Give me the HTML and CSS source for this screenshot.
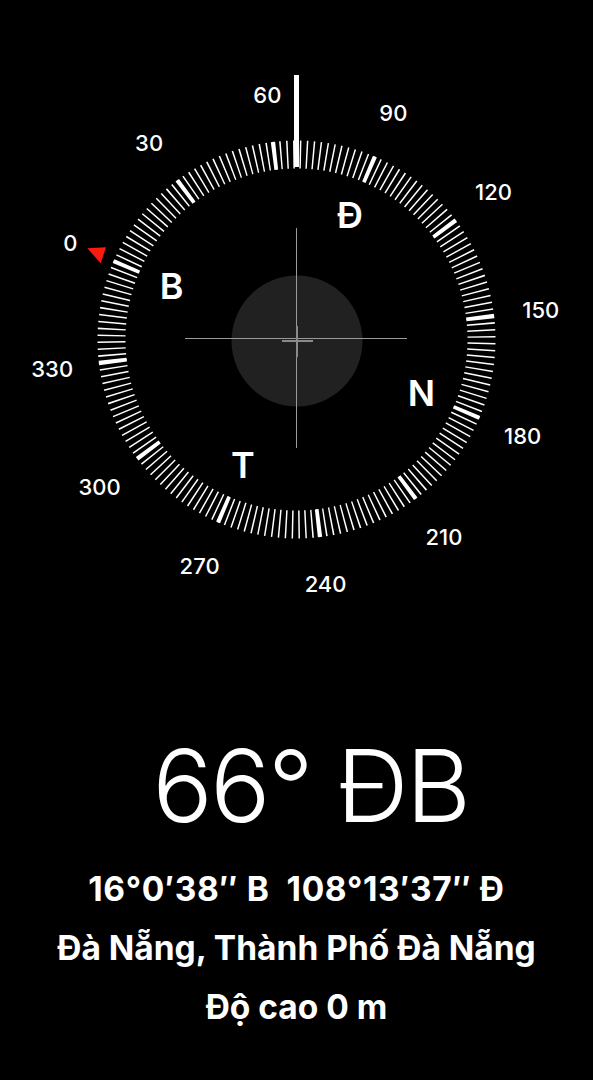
FILE: index.html
```html
<!DOCTYPE html>
<html lang="vi">
<head>
    <meta charset="UTF-8">
    <meta name="viewport" content="width=device-width, initial-scale=1.0">
    <title>La bàn</title>
    <link rel="stylesheet" href="styles.css">
</head>
<body>
    <main class="compass-screen">
        <svg class="dial" width="593" height="640" viewBox="0 0 593 640">
            <!-- vạch chia, xoay theo hướng 66.8 -->
            <g transform="rotate(-66.8 296.5 339.5)">
                <circle class="ticks-minor" cx="296.5" cy="339.5" r="185" pathLength="360"/>
                <circle class="ticks-major" cx="296.5" cy="339.5" r="185" pathLength="360"/>
            </g>

            <rect class="pointer" x="294" y="75" width="5" height="92"/>

            <polygon class="north-mark" points="87.3,248.3 106,247.3 100.7,263.3"/>

            <g class="deg-labels">
                <text x="70.4" y="250.6">0</text>
                <text x="149.1" y="150.5">30</text>
                <text x="267.4" y="103.2">60</text>
                <text x="393.4" y="121.4">90</text>
                <text x="493.5" y="200.2">120</text>
                <text x="540.8" y="318.4">150</text>
                <text x="522.6" y="444.4">180</text>
                <text x="443.9" y="544.5">210</text>
                <text x="325.6" y="591.8">240</text>
                <text x="199.6" y="573.6">270</text>
                <text x="99.5" y="494.9">300</text>
                <text x="52.2" y="376.6">330</text>
            </g>

            <g class="cardinals">
                <text x="171.5" y="298.9">B</text>
                <text x="350.1" y="227.5">Đ</text>
                <text x="421.5" y="406.1">N</text>
                <text x="242.9" y="477.5">T</text>
            </g>

            <circle class="level" cx="297" cy="341" r="65.5"/>
            <line class="cross" x1="185" y1="338.5" x2="407" y2="338.5"/>
            <line class="cross" x1="296.5" y1="228" x2="296.5" y2="448"/>
            <line class="bubble" x1="282" y1="341" x2="313" y2="341"/>
            <line class="bubble" x1="297" y1="326" x2="297" y2="357"/>
        </svg>

        <div class="heading">66° ĐB</div>

        <div class="details">
            <div class="coords">16°0′38″ B&nbsp; 108°13′37″ Đ</div>
            <div>Đà Nẵng, Thành Phố Đà Nẵng</div>
            <div>Độ cao 0 m</div>
        </div>
    </main>
</body>
</html>
```

FILE: styles.css
```css
body {
    margin: 0;
    background-color: #000;
    color: #fff;
    font-family: Inter, "Noto Sans", sans-serif;
    overflow: hidden;
}

.compass-screen {
    display: flex;
    flex-direction: column;
    align-items: center;
    width: 593px;
    height: 1080px;
}

.dial {
    display: block;
}

.ticks-minor {
    fill: none;
    stroke: #fff;
    stroke-width: 28;
    stroke-dasharray: 0.46 1.54;
    stroke-dashoffset: 0.23;
}

.ticks-major {
    fill: none;
    stroke: #fff;
    stroke-width: 28;
    stroke-dasharray: 1.25 28.75;
    stroke-dashoffset: 0.625;
}

.pointer {
    fill: #fff;
}

.north-mark {
    fill: #ff1a0f;
}

.deg-labels text {
    fill: #fff;
    font-size: 22px;
    font-weight: 500;
    text-anchor: middle;
}

.cardinals text {
    fill: #fff;
    font-size: 36px;
    font-weight: 600;
    text-anchor: middle;
}

.level {
    fill: #212121;
}

.cross {
    stroke: #9a9a9a;
    stroke-width: 1;
}

.bubble {
    stroke: #8a8a8a;
    stroke-width: 2;
}

.heading {
    margin-top: 96px;
    padding-left: 28px;
    font-size: 100px;
    font-weight: 300;
    line-height: 1;
    letter-spacing: -2.5px;
}

.details {
    margin-top: 24px;
    display: flex;
    flex-direction: column;
    align-items: center;
    font-size: 33.5px;
    font-weight: 700;
    line-height: 59px;
}

.coords {
    letter-spacing: 0.6px;
}
```
